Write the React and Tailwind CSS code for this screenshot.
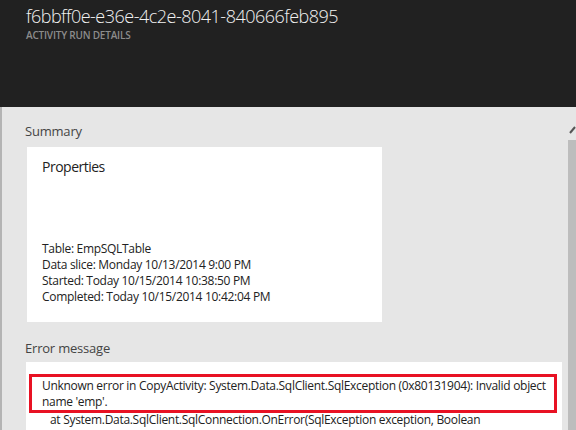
export default function App() {
  const props = [
    "Table: EmpSQLTable",
    "Data slice: Monday 10/13/2014 9:00 PM",
    "Started: Today 10/15/2014 10:38:50 PM",
    "Completed: Today 10/15/2014 10:42:04 PM",
  ];

  return (
    <div className="w-[576px] h-[430px] overflow-hidden flex flex-col font-['Open_Sans',sans-serif]">
      <div className="h-[107px] shrink-0 bg-[#212121] pl-[26px] pt-[3px]">
        <div className="text-[18px] leading-[26px] text-[#f2f2f2] font-light tracking-[-0.5px]">
          f6bbff0e-e36e-4c2e-8041-840666feb895
        </div>
        <div className="text-[10px] leading-[13px] text-[#8c8c8c] font-semibold uppercase tracking-[-0.2px]">
          Activity run details
        </div>
      </div>

      <div className="flex flex-1 min-h-0">
        <div className="w-[2px] bg-[#b4b4b4]" />
        <div className="flex-1 bg-[#e6e6e6] pl-[23px] pr-[6px] pt-[15px]">
          <div className="text-[13px] leading-[18px] text-[#444] tracking-[-0.2px]">Summary</div>
          <div className="mt-[7px] ml-[2px] w-[355px] h-[175px] bg-white flex flex-col px-[15px] pt-[10px] pb-[17px]">
            <div className="text-[14px] leading-[20px] text-[#222] tracking-[-0.5px]">Properties</div>
            <div className="mt-auto text-[12px] leading-[16px] text-[#222] tracking-[-0.3px]">
              {props.map((p) => (
                <div key={p}>{p}</div>
              ))}
            </div>
          </div>

          <div className="mt-[17px] text-[13px] leading-[18px] text-[#444] tracking-[-0.2px]">Error message</div>
          <div className="mt-[5px] ml-[1px] bg-white pt-[12px] pl-[3px] pr-[5px] h-[80px] text-[12px] leading-[16px] text-[#222] tracking-[-0.3px]">
            <div className="border-[3px] border-[#e81123] pl-[10px] pr-[4px] pt-[1px]">
              Unknown error in CopyActivity: System.Data.SqlClient.SqlException (0x80131904): Invalid object name 'emp'.
            </div>
            <div className="pl-[21px] -mt-[1px] whitespace-nowrap">
              at System.Data.SqlClient.SqlConnection.OnError(SqlException exception, Boolean
            </div>
            <div className="pl-[10px] whitespace-nowrap">
              breakConnection, Action`1 wrapCloseInAction)
            </div>
          </div>
        </div>
        <div className="w-[8px] bg-[#e6e6e6] flex flex-col">
          <svg width="8" height="33" viewBox="0 0 8 33" className="shrink-0">
            <path d="M2 26 L7 20" stroke="#555" strokeWidth="2" fill="none" />
          </svg>
          <div className="flex-1 bg-[#bdbdbd]" />
        </div>
      </div>
    </div>
  );
}
